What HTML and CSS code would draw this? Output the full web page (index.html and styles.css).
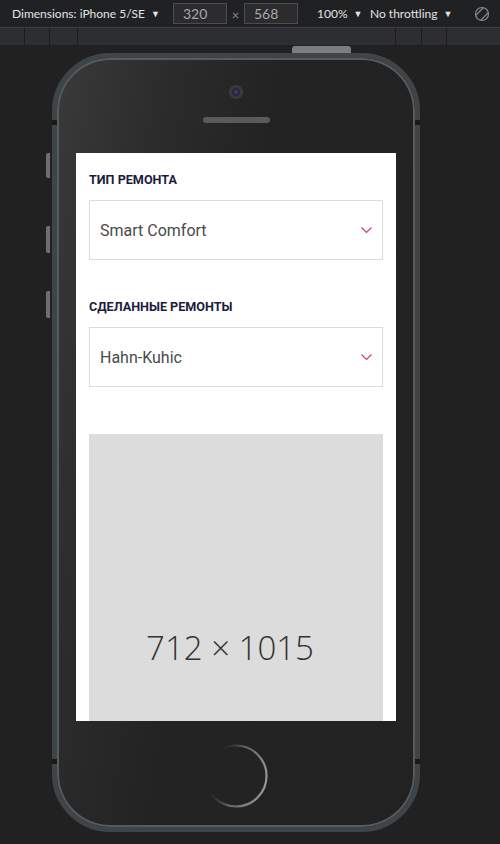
FILE: index.html
```html
<!DOCTYPE html>
<html lang="ru">
<head>
<meta charset="utf-8">
<title>Device mode</title>
<link rel="stylesheet" href="styles.css">
</head>
<body>
<div class="toolbar">
  <span class="tb-item tb-dims">Dimensions: iPhone 5/SE <span class="caret">▼</span></span>
  <span class="tb-input">320</span>
  <span class="tb-x">×</span>
  <span class="tb-input">568</span>
  <span class="tb-item tb-zoom">100% <span class="caret">▼</span></span>
  <span class="tb-item tb-throttle">No throttling <span class="caret">▼</span></span>
  <svg class="tb-rotate" width="16" height="16" viewBox="0 0 16 16">
    <defs><clipPath id="rc"><circle cx="8" cy="8" r="6.5"/></clipPath></defs>
    <circle cx="8" cy="8" r="6.5" fill="none" stroke="#8a8a8a" stroke-width="1.2"/>
    <rect x="4.5" y="1" width="7" height="14" rx="1" fill="none" stroke="#8a8a8a" stroke-width="1.2" transform="rotate(45 8 8)" clip-path="url(#rc)"/>
  </svg>
</div>
<div class="ruler">
  <div class="seg s1"></div>
  <div class="seg s2"></div>
  <div class="seg s3"></div>
  <div class="seg s4"></div>
  <div class="seg s5"></div>
  <div class="seg s6"></div>
  <div class="seg s7"></div>
</div>
<div class="stage">
  <div class="phone">
    <span class="btn-top"></span>
    <span class="btn-side b1"></span>
    <span class="btn-side b2"></span>
    <span class="btn-side b3"></span>
    <span class="mark ml1"></span>
    <span class="mark mr1"></span>
    <span class="mark ml2"></span>
    <span class="mark mr2"></span>
    <div class="phone-top">
      <span class="camera"></span>
      <span class="speaker"></span>
    </div>
    <div class="screen">
      <div class="field">
        <div class="label">Тип ремонта</div>
        <div class="select">
          <span class="select-value">Smart Comfort</span>
          <svg class="chev" width="11" height="6" viewBox="0 0 11 6"><polyline points="0.5,0.5 5.5,5.5 10.5,0.5" fill="none" stroke="#d63a5c" stroke-width="1.1"/></svg>
        </div>
      </div>
      <div class="field field-2">
        <div class="label">Сделанные ремонты</div>
        <div class="select">
          <span class="select-value">Hahn-Kuhic</span>
          <svg class="chev" width="11" height="6" viewBox="0 0 11 6"><polyline points="0.5,0.5 5.5,5.5 10.5,0.5" fill="none" stroke="#d63a5c" stroke-width="1.1"/></svg>
        </div>
      </div>
      <div class="placeholder"><span>712 × 1015</span></div>
    </div>
    <div class="phone-bottom">
      <svg class="home" width="64" height="64" viewBox="0 0 64 64">
        <defs>
          <linearGradient id="hg" x1="0" y1="0.4" x2="1" y2="0.7">
            <stop offset="0" stop-color="#2a2a2a" stop-opacity="0"/>
            <stop offset="0.12" stop-color="#2a2a2a" stop-opacity="0"/>
            <stop offset="0.45" stop-color="#5c5c5c"/>
            <stop offset="1" stop-color="#9a9a9a"/>
          </linearGradient>
        </defs>
        <circle cx="32" cy="32" r="30.5" fill="none" stroke="url(#hg)" stroke-width="2.2"/>
      </svg>
    </div>
  </div>
</div>
</body>
</html>
```
FILE: styles.css
```css
* { box-sizing: border-box; }
html, body {
  margin: 0;
  padding: 0;
}
body {
  width: 500px;
  height: 844px;
  overflow: hidden;
  background: #212122;
  font-family: "Open Sans", "Noto Sans", sans-serif;
}
.toolbar {
  height: 28px;
  display: flex;
  align-items: center;
  background: #202123;
  color: #e3e3e3;
  font-family: Lato, "Open Sans", sans-serif;
  font-size: 12px;
  padding-left: 12px;
  border-bottom: 1px solid #3c3d40;
}
.tb-item { white-space: nowrap; flex: none; }
.caret { font-size: 9px; margin-left: 3px; position: relative; top: -1px; }
.tb-dims { width: 161px; }
.tb-input {
  flex: none;
  width: 54px;
  height: 21px;
  background: #2c2c2e;
  border: 1px solid #4c4c4e;
  color: #a8a8a8;
  font-size: 14px;
  line-height: 19px;
  padding-left: 9px;
}
.tb-x { flex: none; width: 17px; text-align: center; color: #8a8a8a; font-size: 13px; padding-top: 3px; }
.tb-zoom { margin-left: 19px; width: 53px; }
.tb-throttle { width: 104px; }
.tb-rotate { flex: none; }

.ruler {
  height: 17px;
  display: flex;
  background: #2d2e31;
}
.seg { height: 100%; border-right: 1px solid #1c1c1e; }
.s1 { width: 25px; }
.s2 { width: 25px; }
.s3 { width: 28px; }
.s4 { width: 318px; }
.s5 { width: 26px; }
.s6 { width: 25px; }
.s7 { flex: 1; border-right: none; }

.stage {
  padding: 8px 0 0 52px;
}
.phone {
  position: relative;
  width: 368px;
  height: 779px;
  border: 5px solid #414447;
  border-radius: 58px;
  box-shadow: inset 0 0 0 2px #565b5e;
  background: linear-gradient(100deg, #3a3a3a 0%, #2c2c2c 22%, #232323 45%, #222 100%);
  padding: 0 19px;
  display: flex;
  flex-direction: column;
}
.btn-top {
  position: absolute;
  left: 235px;
  top: -12px;
  width: 59px;
  height: 7px;
  background: #7d7d7d;
  border-radius: 3px 3px 0 0;
}
.btn-side {
  position: absolute;
  left: -11px;
  width: 4px;
  background: #6e6e6e;
  border-radius: 2px 0 0 2px;
}
.b1 { top: 95px; height: 25px; }
.b2 { top: 168px; height: 27px; }
.b3 { top: 233px; height: 27px; }
.mark {
  position: absolute;
  width: 5px;
  height: 5px;
  background: #19191a;
}
.ml1 { left: -5px; top: 62px; }
.mr1 { right: -5px; top: 62px; }
.ml2 { left: -5px; top: 701px; }
.mr2 { right: -5px; top: 701px; }

.phone-top {
  height: 95px;
  display: flex;
  flex-direction: column;
  align-items: center;
  padding-top: 27px;
}
.camera {
  width: 14px;
  height: 14px;
  border-radius: 50%;
  background: radial-gradient(circle, #4a4c78 0, #2c2e4e 2px, #23243a 3.5px, #38383b 4.5px, #3c3c3e 7px);
}
.speaker {
  margin-top: 18px;
  width: 67px;
  height: 6px;
  border-radius: 3px;
  background-color: #2e2e2e;
  background-image: radial-gradient(circle, #6a6a6a 0.6px, transparent 1px);
  background-size: 2px 2px;
}

.screen {
  width: 320px;
  height: 568px;
  background: #fff;
  padding: 19px 13px 0;
  overflow: hidden;
  flex: none;
  font-family: Roboto, "Liberation Sans", sans-serif;
}
.field-2 { margin-top: 39px; }
.label {
  font-size: 12.6px;
  line-height: 16px;
  font-weight: 700;
  text-transform: uppercase;
  color: #1c1c3c;
}
.select {
  margin-top: 12px;
  height: 60px;
  border: 1px solid #dcdcdc;
  display: flex;
  align-items: center;
  justify-content: space-between;
  padding: 0 10px;
}
.select-value {
  font-size: 16px;
  color: #4a4a4a;
}
.chev { display: block; }
.placeholder {
  margin-top: 47px;
  height: 419px;
  background: #dcdcdc;
  display: flex;
  align-items: center;
  justify-content: center;
  padding: 8px 12px 0 0;
}
.placeholder span {
  font-family: "Open Sans", sans-serif;
  font-size: 33px;
  font-weight: 300;
  color: #333;
}

.phone-bottom {
  flex: 1;
  display: flex;
  justify-content: center;
  padding-top: 23px;
}
.home { display: block; }
```
